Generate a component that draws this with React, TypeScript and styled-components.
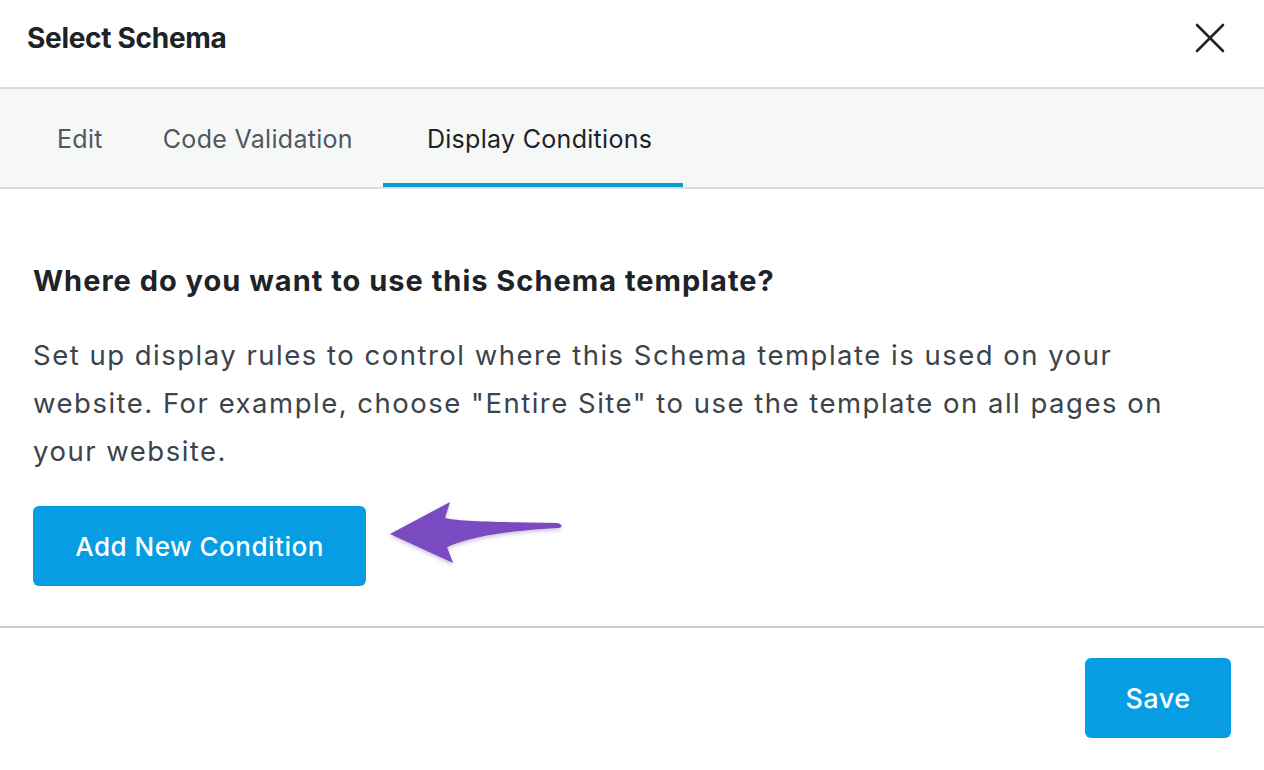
import React from 'react';
import styled, { createGlobalStyle } from 'styled-components';

const GlobalStyle = createGlobalStyle`
  html, body {
    margin: 0;
    padding: 0;
    background: #ffffff;
  }
  body {
    font-family: Inter, "Noto Sans", "Liberation Sans", sans-serif;
    -webkit-font-smoothing: antialiased;
  }
`

const Modal = styled.div`
  width: 1264px;
  height: 770px;
  display: flex;
  flex-direction: column;
  background: #ffffff;
  overflow: hidden;
`

const Header = styled.div`
  height: 89px;
  flex-shrink: 0;
  display: flex;
  align-items: center;
  justify-content: space-between;
  padding: 0 38px 12px 27px;
  box-sizing: border-box;
  border-bottom: 2px solid #dcdcde;
`

const Title = styled.h1`
  margin: 0;
  font-size: 28px;
  font-weight: 700;
  color: #1d2327;
  letter-spacing: -0.3px;
`

const CloseButton = styled.button`
  width: 32px;
  height: 32px;
  padding: 0;
  border: none;
  background: none;
  display: flex;
  align-items: center;
  justify-content: center;
  cursor: pointer;
`

const TabBar = styled.div`
  height: 100px;
  flex-shrink: 0;
  display: flex;
  align-items: stretch;
  padding-left: 27px;
  box-sizing: border-box;
  background: #f6f7f7;
  border-bottom: 2px solid #dcdcde;
`

const Tab = styled.div<{ $active?: boolean }>`
  display: flex;
  align-items: center;
  padding: ${({ $active }) => ($active ? '6px 31px 0 44px' : '6px 30px 0 30px')};
  font-size: 25px;
  letter-spacing: 0.3px;
  color: ${({ $active }) => ($active ? '#1d2327' : '#50575e')};
  border-bottom: 4px solid ${({ $active }) => ($active ? '#0a9bd7' : 'transparent')};
  cursor: pointer;
`

const Content = styled.div`
  flex: 1;
  padding: 74px 33px 0 33px;
  box-sizing: border-box;
`

const Heading = styled.h2`
  margin: 0;
  font-size: 29px;
  line-height: 36px;
  font-weight: 700;
  letter-spacing: 1px;
  color: #1d2327;
`

const Description = styled.p`
  margin: 32px 0 0 0;
  max-width: 1160px;
  font-size: 27.5px;
  line-height: 48px;
  letter-spacing: 1.5px;
  color: #3c434a;
`

const ActionRow = styled.div`
  display: flex;
  align-items: center;
  margin-top: 31px;
`

const PrimaryButton = styled.button<{ $width: number; $height: number; $size: number }>`
  width: ${({ $width }) => $width}px;
  height: ${({ $height }) => $height}px;
  border: none;
  border-radius: 6px;
  background: #069de3;
  color: #ffffff;
  font-family: inherit;
  font-size: ${({ $size }) => $size}px;
  font-weight: 500;
  letter-spacing: 0.5px;
  cursor: pointer;
`

const ArrowMark = styled.svg`
  margin-left: 21px;
  margin-top: -26px;
  filter: drop-shadow(0 2px 2px rgba(80, 40, 140, 0.3));
`

const Footer = styled.div`
  height: 144px;
  flex-shrink: 0;
  display: flex;
  justify-content: flex-end;
  padding: 30px 33px 0 0;
  box-sizing: border-box;
  border-top: 2px solid #c8ccd0;
`

export default function App() {
  return (
    <>
      <GlobalStyle />
      <Modal>
        <Header>
          <Title>Select Schema</Title>
          <CloseButton aria-label="Close">
            <svg width="30" height="30" viewBox="0 0 30 30">
              <path d="M2 2 L28 28 M28 2 L2 28" stroke="#1d2327" strokeWidth="2.6" strokeLinecap="round" />
            </svg>
          </CloseButton>
        </Header>
        <TabBar>
          <Tab>Edit</Tab>
          <Tab>Code Validation</Tab>
          <Tab $active>Display Conditions</Tab>
        </TabBar>
        <Content>
          <Heading>Where do you want to use this Schema template?</Heading>
          <Description>
            Set up display rules to control where this Schema template is used on your website. For example, choose "Entire Site" to use the template on all pages on your website.
          </Description>
          <ActionRow>
            <PrimaryButton $width={333} $height={80} $size={26}>Add New Condition</PrimaryButton>
            <ArrowMark width="178" height="68" viewBox="0 0 178 68">
              <path
                d="M3 35 L63 3 L58 19 C75 23 120 23 170 24 C176 25 176 29 170 29 C120 32 85 37 60 48 L66 64 Z"
                fill="#7a4bc0"
              />
            </ArrowMark>
          </ActionRow>
        </Content>
        <Footer>
          <PrimaryButton $width={146} $height={80} $size={27}>Save</PrimaryButton>
        </Footer>
      </Modal>
    </>
  );
}
